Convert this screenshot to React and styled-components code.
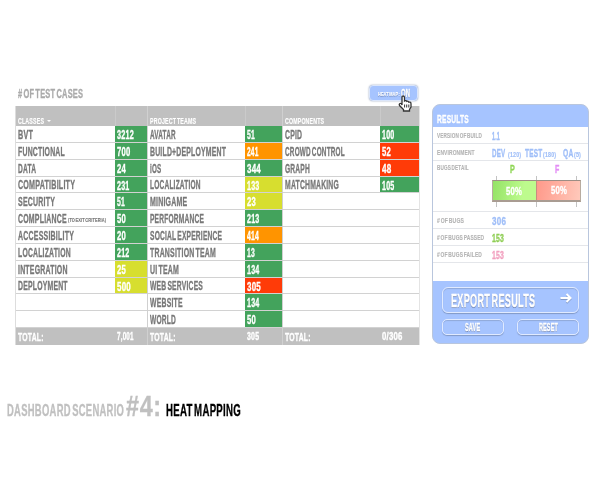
import React, { useLayoutEffect, useRef, useState } from "react";
import styled, { createGlobalStyle } from "styled-components";

const Global = createGlobalStyle`
  *{box-sizing:border-box}
  body{margin:0;background:#fff;font-family:"Liberation Sans Narrow","Liberation Sans",Arial,sans-serif;font-weight:700}
`;

const TextBox = styled.span`
  display: block;
  flex: none;
  width: ${(p) => p.$w}px;
  height: ${(p) => p.$cap}px;
  line-height: ${(p) => p.$cap}px;
  font-size: ${(p) => p.$cap / 0.72}px;
  color: ${(p) => p.$color};
  margin-left: ${(p) => p.$ml || 0}px;
  text-shadow: ${(p) => p.$shadow || "none"};
  -webkit-text-stroke: ${(p) => (p.$cap > 7 ? 0.35 : 0.15)}px ${(p) => p.$color};
  word-spacing: -0.16em;
  letter-spacing: 0.03em;
  white-space: nowrap;
`;
const TextInner = styled.span`
  display: inline-block;
  vertical-align: top;
  transform-origin: 0 50%;
`;

// Condenses a label horizontally until it takes exactly the width given.
function Label({ children, w, cap = 9, color = "#777", ml, shadow }) {
  const ref = useRef(null);
  const [scale, setScale] = useState(1);
  useLayoutEffect(() => {
    setScale(w / ref.current.offsetWidth);
  }, [w, children]);
  return (
    <TextBox $w={w} $cap={cap} $color={color} $ml={ml} $shadow={shadow}>
      <TextInner ref={ref} style={{ transform: `scaleX(${scale})` }}>{children}</TextInner>
    </TextBox>
  );
}

const Page = styled.main`
  width: 600px;
  height: 480px;
  padding: 84px 0 0 7px;
  overflow: hidden;
`;
const Board = styled.div`
  display: flex;
  align-items: flex-start;
  gap: 12px;
  margin-left: 8px;
`;
const TableSide = styled.section`
  width: 405px;
`;
const TopBar = styled.header`
  height: 22px;
  display: flex;
  justify-content: space-between;
  padding: 1px 2px 0 3px;
`;
const Title = styled.div`
  padding-top: 5px;
`;
const HeatButton = styled.button`
  position: relative;
  width: 49px;
  height: 16px;
  padding: 0 0 0 8px;
  display: flex;
  align-items: center;
  gap: 1px;
  font: inherit;
  background: #a6c4ff;
  border: 1px solid #dbe6fb;
  border-radius: 4px;
  box-shadow: 0 0 2px #8c9cb8;
`;
const SmallLift = styled.div`
  padding-top: 2px;
`;
const Cursor = styled.svg`
  position: absolute;
  left: 28px;
  top: 9px;
  width: 14px;
  height: 17px;
`;
const Table = styled.div`
  display: grid;
  grid-template-columns: 132px 135px 137px;
  width: 405px;
  height: 239px;
  border-left: 1px solid #ddd;
`;
const Group = styled.div`
  display: grid;
  grid-template-rows: 20px 202px 17px;
  border-right: 1px solid ${(p) => (p.$last ? "#e4e4e4" : "#d0d0d0")};
`;
const Cols = styled.div`
  display: grid;
  grid-template-columns: 1fr ${(p) => p.$v}px;
`;
const HeadCell = styled.div`
  display: flex;
  align-items: flex-end;
  gap: 3px;
  padding: 0 0 2px 1.6px;
  background: #c0c0c0;
  border-left: ${(p) => (p.$sep ? "1px solid #cacaca" : 0)};
`;
const Caret = styled.i`
  border: 2px solid transparent;
  border-top-color: #fff;
  border-bottom: 0;
  margin-bottom: 2px;
`;
const Rows = styled.div`
  display: grid;
  grid-template-rows: repeat(12, 1fr);
`;
const Row = styled.div`
  display: grid;
  grid-template-columns: 1fr ${(p) => p.$v}px;
  border-bottom: 1px solid #d2d2d2;
`;
const Cell = styled.div`
  display: flex;
  align-items: center;
  gap: 1px;
  padding: 3px 0 0 1.6px;
  background: ${(p) => p.$bg || "transparent"};
`;
const FootCell = styled(Cell)`
  padding-top: ${(p) => p.$pt}px;
  background: #c0c0c0;
`;
const Panel = styled.aside`
  width: 157px;
  height: 240px;
  margin-top: 20px;
  border: 1px solid #b9c6dd;
  border-radius: 8px;
  background: #a6c4ff;
  overflow: hidden;
`;
const PanelHead = styled.div`
  height: 22px;
  padding: 10px 0 0 4px;
`;
const PanelBody = styled.div`
  height: 154px;
  background: #fff;
`;
const Info = styled.div`
  display: grid;
  grid-template-columns: 55px 1fr;
  height: ${(p) => p.$h || 17}px;
  padding: ${(p) => p.$pt || 4}px 0 0 4px;
  border-bottom: 1px solid #e4e6ea;
`;
const Key = styled.div`
  padding-top: ${(p) => p.$pt ?? 2}px;
`;
const Values = styled.div`
  display: flex;
  align-items: flex-end;
  height: 9px;
`;
const Split = styled.div`
  width: 89px;
`;
const Legend = styled.div`
  display: flex;
  height: 11px;
  padding-left: 18px;
`;
const Ticks = styled.div`
  display: flex;
  justify-content: space-between;
  padding: 0 4px;
  height: ${(p) => p.$h}px;
`;
const Tick = styled.i`
  width: 1px;
  background: #c3c3c3;
`;
const Bar = styled.div`
  display: grid;
  grid-template-columns: 43px 1fr;
  height: 22px;
  border: 1px solid #b8aca0;
  border-top-color: #9d8e85;
  border-bottom: 2px solid #a99c92;
`;
const Half = styled.div`
  display: flex;
  padding: ${(p) => p.$pt}px 0 0 ${(p) => p.$pl}px;
  background: ${(p) => p.$bg};
  border-left: ${(p) => (p.$mid ? "1px solid #c88c80" : 0)};
`;
const Actions = styled.div`
  padding: 6px 9px 0 9px;
`;
const Button = styled.button`
  display: flex;
  align-items: center;
  justify-content: ${(p) => (p.$wide ? "space-between" : "center")};
  width: ${(p) => (p.$wide ? 137 : 62)}px;
  height: ${(p) => (p.$wide ? 26 : 16)}px;
  padding: ${(p) => (p.$wide ? "2px 6px 0 8px" : "1px 0 0")};
  font: inherit;
  background: transparent;
  border: 1px solid #e0eaff;
  border-radius: ${(p) => (p.$wide ? 6 : 5)}px;
  box-shadow: 0 1px 1px #8299c6, inset 0 1px 1px #91a9d8;
`;
const ButtonRow = styled.div`
  display: flex;
  justify-content: space-between;
  margin-top: 6px;
`;
const Arrow = styled.svg`
  width: 12px;
  height: 12px;
  margin-bottom: 7px;
  filter: drop-shadow(0 1px 0 #8299c6);
`;
const Caption = styled.footer`
  display: flex;
  align-items: flex-end;
  height: 21px;
  margin-top: 51px;
`;

const G = "#43a35c", Y = "#d7de2f", O = "#ff9400", R = "#ff3b08";
const blue = "#9fbef8";
const groups = [
  {
    name: ["CLASSES", 26], v: 32, total: ["7,001", 17], caret: true,
    rows: [
      ["BVT", 15, "3212", 17, G], ["FUNCTIONAL", 47, "700", 13.5, G], ["DATA", 18, "24", 9, G],
      ["COMPATIBILITY", 57, "231", 12.5, G], ["SECURITY", 37, "51", 8, G],
      ["COMPLIANCE", 49, "50", 9, G, "(TO EXIT CRITERIA)"], ["ACCESSIBILITY", 56, "20", 9, G],
      ["LOCALIZATION", 53, "212", 12.5, G], ["INTEGRATION", 49.5, "25", 9, Y], ["DEPLOYMENT", 50, "500", 14, Y],
    ],
  },
  {
    name: ["PROJECT TEAMS", 46], v: 37, total: ["305", 12.5],
    rows: [
      ["AVATAR", 26, "51", 8, G], ["BUILD+DEPLOYMENT", 76, "241", 11.5, O], ["iOS", 11.5, "344", 14, G],
      ["LOCALIZATION", 51, "133", 12.5, Y], ["MINIGAME", 37.5, "23", 9, Y], ["PERFORMANCE", 54, "213", 12.5, G],
      ["SOCIAL EXPERIENCE", 72, "414", 12, O], ["TRANSITION TEAM", 66, "13", 8, G], ["UI TEAM", 29, "134", 12.5, G],
      ["WEB SERVICES", 53, "305", 14, R], ["WEBSITE", 33, "134", 12.5, G], ["WORLD", 26, "50", 9, G],
    ],
  },
  {
    name: ["COMPONENTS", 39], v: 39, total: ["0/306", 21],
    rows: [
      ["CPID", 17, "100", 12.5, G], ["CROWD CONTROL", 60, "52", 9, R], ["GRAPH", 25, "48", 9.5, R],
      ["MATCHMAKING", 54, "105", 12.5, G],
    ],
  },
];

function TableGroup({ group, last }) {
  const rows = Array.from({ length: 12 }, (_, i) => group.rows[i]);
  return (
    <Group $last={last}>
      <Cols $v={group.v}>
        <HeadCell>
          <Label w={group.name[1]} cap={6.3} color="#fff">{group.name[0]}</Label>
          {group.caret && <Caret />}
        </HeadCell>
        <HeadCell $sep />
      </Cols>
      <Rows>
        {rows.map((r, i) => (
          <Row key={i} $v={group.v}>
            <Cell>
              {r && <Label w={r[1]}>{r[0]}</Label>}
              {r && r[5] && <SmallLift><Label w={38} cap={4.3}>{r[5]}</Label></SmallLift>}
            </Cell>
            <Cell $bg={r && r[4]}>{r && <Label w={r[3]} cap={8.6} color="#fff">{r[2]}</Label>}</Cell>
          </Row>
        ))}
      </Rows>
      <Cols $v={group.v}>
        <FootCell $pt={2}><Label w={25.5} cap={8.3} color="#fff">TOTAL:</Label></FootCell>
        <FootCell $pt={0}><Label w={group.total[1]} cap={7.2} color="#fff">{group.total[0]}</Label></FootCell>
      </Cols>
    </Group>
  );
}

function Metric({ name, w, value, vw, color }) {
  return (
    <Info>
      <Key><Label w={w} cap={5} color="#b4b4b4">{name}</Label></Key>
      <Values><Label w={vw} cap={8.3} color={color}>{value}</Label></Values>
    </Info>
  );
}

export default function App() {
  const sh = "0 1px 1px #687ca8";
  return (
    <Page>
      <Global />
      <Board>
        <TableSide>
          <TopBar>
            <Title><Label w={65} color="#aaa"># OF TEST CASES</Label></Title>
            <HeatButton>
              <SmallLift><Label w={22} cap={4.4} color="#fff" shadow="0 1px 1px #7186b3">HEAT MAP :</Label></SmallLift>
              <Label w={9} cap={8} color="#fff" shadow="0 1px 1px #7186b3">ON</Label>
              <Cursor viewBox="0 0 14 17">
                <path d="M4 10V2.5Q4 1 5.2 1T6.5 2.5V6Q8 5 8.8 6.4Q10.3 5.7 10.8 7.2Q13 6.6 13 9V12L11.5 14.5V16H5.5V14.5L1.5 10.5Q.8 9.2 2 8.5T4 10Z" fill="#fff" stroke="#333" strokeWidth="1.3" />
                <path d="M6.6 9.5v3M8.7 9.5v3M10.8 9.5v3" stroke="#333" strokeWidth="1" />
              </Cursor>
            </HeatButton>
          </TopBar>
          <Table>
            {groups.map((g, i) => <TableGroup key={i} group={g} last={i === 2} />)}
          </Table>
        </TableSide>
        <Panel>
          <PanelHead><Label w={32} cap={8.4} color="#fff">RESULTS</Label></PanelHead>
          <PanelBody>
            <Metric name="VERSION OF BUILD" w={45} value="1.1" vw={8} color={blue} />
            <Info>
              <Key><Label w={38} cap={5} color="#b4b4b4">ENVIRONMENT</Label></Key>
              <Values>
                <Label w={13.5} cap={8.3} color={blue}>DEV</Label>
                <Label w={13} cap={5} ml={2} color={blue}>(120)</Label>
                <Label w={17.5} cap={8.3} ml={4.5} color={blue}>TEST</Label>
                <Label w={13} cap={5} ml={0.5} color={blue}>(180)</Label>
                <Label w={10.5} cap={8.3} ml={6.5} color={blue}>QA</Label>
                <Label w={7} cap={5} ml={0.5} color={blue}>(5)</Label>
              </Values>
            </Info>
            <Info $h={51}>
              <Key $pt={0}><Label w={32} cap={5} color="#b4b4b4">BUGS DETAIL</Label></Key>
              <Split>
                <Legend>
                  <Label w={5} cap={8.3} color="#8fd655">P</Label>
                  <Label w={4.3} cap={8.3} ml={39.5} color="#e38cf5">F</Label>
                </Legend>
                <Ticks $h={4}><Tick /><Tick /><Tick /></Ticks>
                <Bar>
                  <Half $pl={13} $pt={6} $bg="linear-gradient(100deg, #94e266, #bdfb8d 70%)">
                    <Label w={16} cap={8} color="#fff">50%</Label>
                  </Half>
                  <Half $mid $pl={14} $pt={5} $bg="linear-gradient(100deg, #ff998a, #ffc9bb)">
                    <Label w={16} cap={8} color="#fff">50%</Label>
                  </Half>
                </Bar>
                <Ticks $h={5}><Tick /><Tick /><Tick /></Ticks>
              </Split>
            </Info>
            <Metric name="# OF BUGS" w={27} value="306" vw={14} color={blue} />
            <Metric name="# OF BUGS PASSED" w={47} value="153" vw={12} color="#8fce55" />
            <Metric name="# OF BUGS FAILED" w={45} value="153" vw={12} color="#f2a0bf" />
          </PanelBody>
          <Actions>
            <Button $wide>
              <Label w={84.5} cap={13} color="#fff" shadow={sh}>EXPORT RESULTS</Label>
              <Arrow viewBox="0 0 12 12">
                <path d="M.5 6H10M6.5 2L10.5 6L6.5 10" fill="none" stroke="#fff" strokeWidth="2" />
              </Arrow>
            </Button>
            <ButtonRow>
              <Button><Label w={15.5} cap={7.2} color="#fff" shadow={sh}>SAVE</Label></Button>
              <Button><Label w={19} cap={7.2} color="#fff" shadow={sh}>RESET</Label></Button>
            </ButtonRow>
          </Actions>
        </Panel>
      </Board>
      <Caption>
        <Label w={117} cap={12.3} color="#c0c0c0">DASHBOARD SCENARIO</Label>
        <Label w={36} cap={21} ml={2} color="#c0c0c0">#4:</Label>
        <Label w={75} cap={12.3} ml={4} color="#000">HEAT MAPPING</Label>
      </Caption>
    </Page>
  );
}
